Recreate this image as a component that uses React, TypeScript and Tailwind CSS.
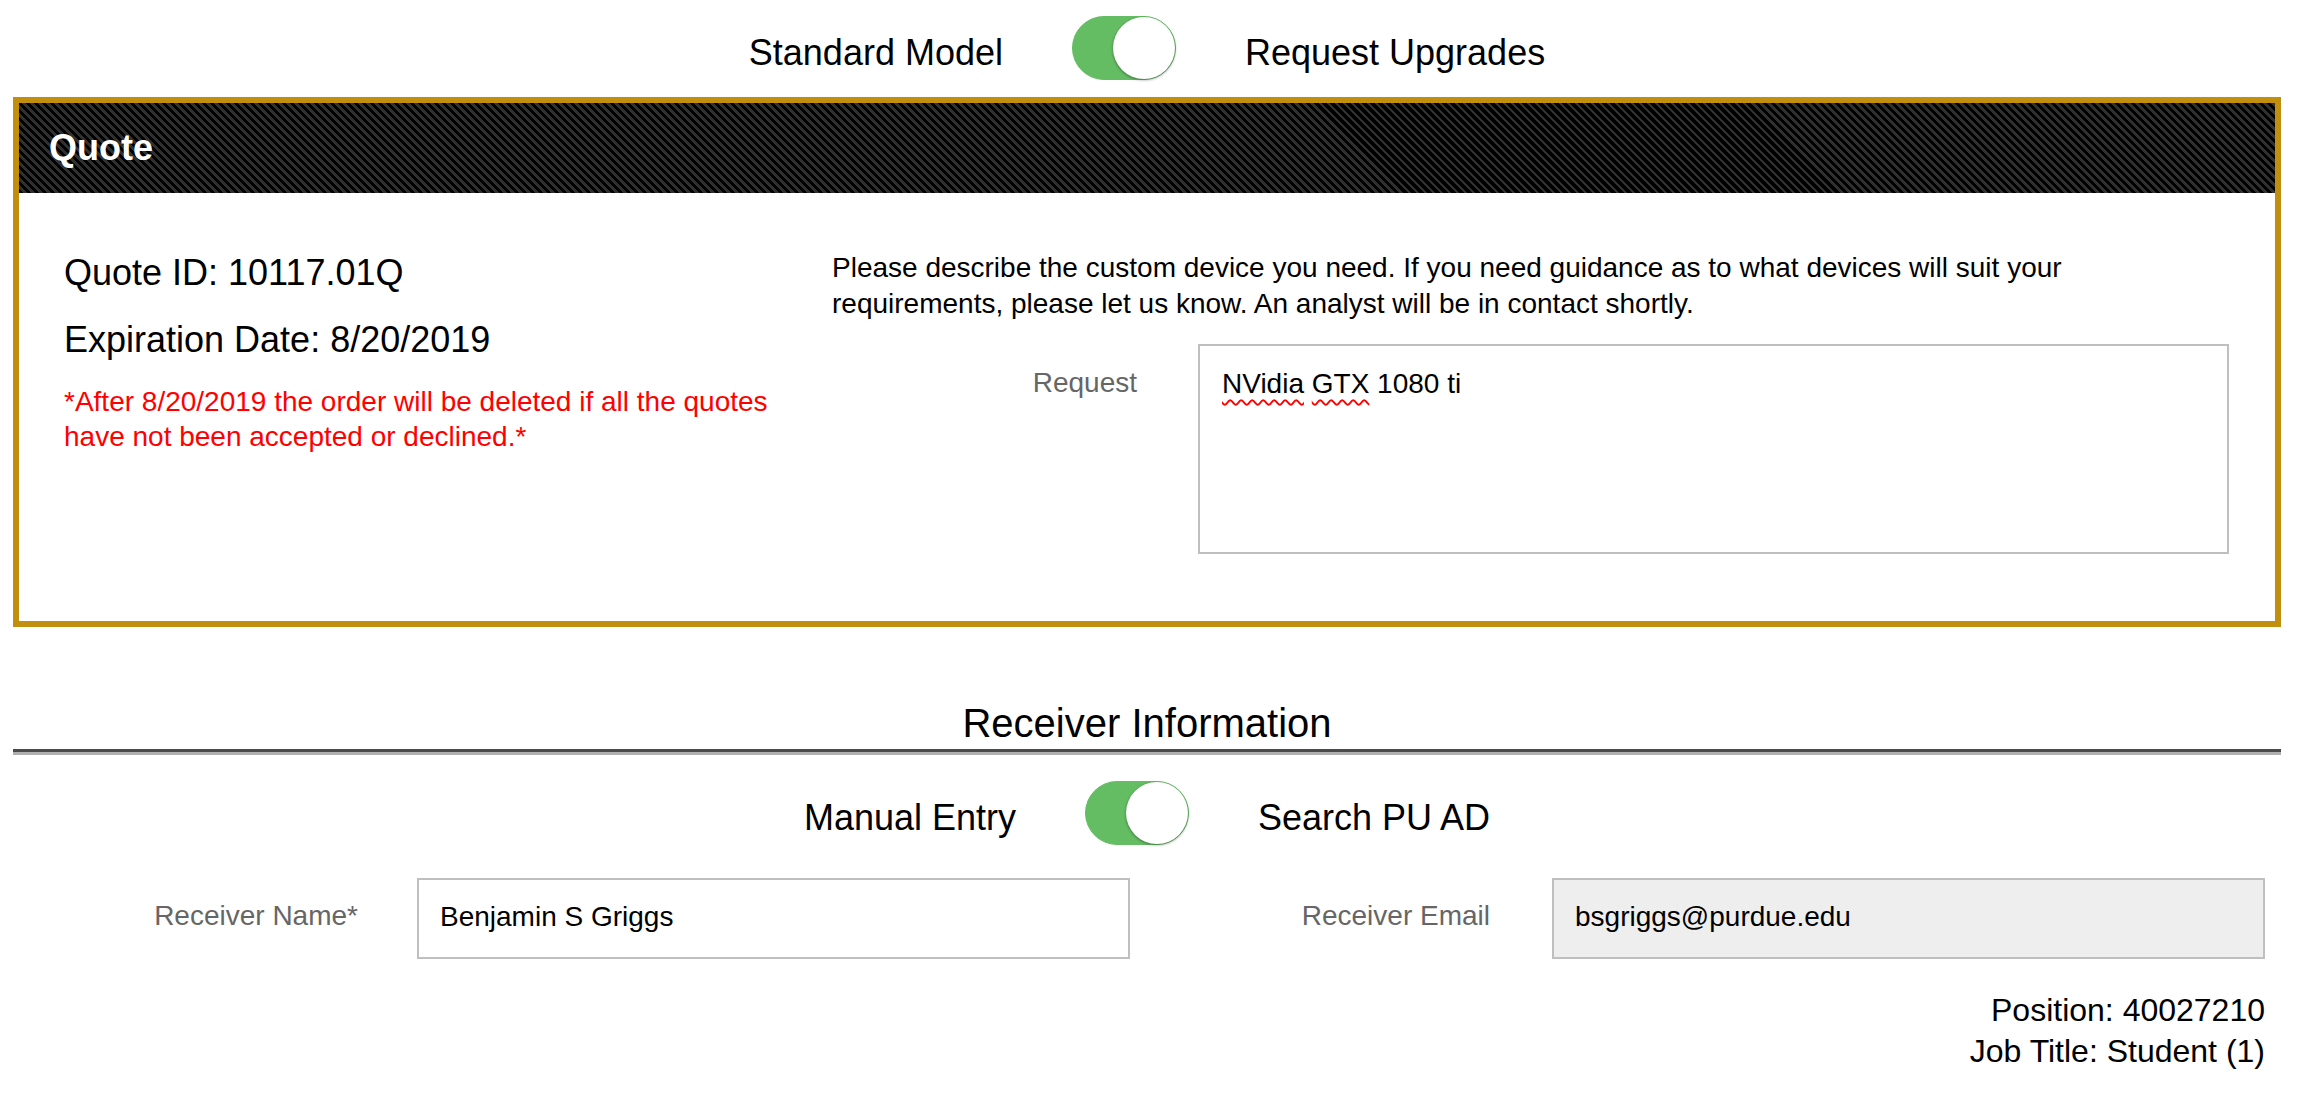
import React from "react";

function Switch() {
  return (
    <div className="flex h-[64px] w-[104px] shrink-0 items-center justify-end rounded-full border border-[#64bd63] bg-[#64bd63]">
      <div className="h-[62px] w-[62px] rounded-full bg-white shadow-[0_1px_3px_rgba(0,0,0,0.4)]" />
    </div>
  );
}

function ToggleRow({ left, right }: { left: string; right: string }) {
  return (
    <div className="flex items-start justify-center gap-[69px]">
      <span className="mt-[17px] text-[36px] leading-[40px] whitespace-nowrap">{left}</span>
      <Switch />
      <span className="mt-[17px] text-[36px] leading-[40px] whitespace-nowrap">{right}</span>
    </div>
  );
}

export default function App() {
  return (
    <div className="h-[1102px] w-[2304px] overflow-hidden bg-white text-black font-['Liberation_Sans',Arial,Helvetica,sans-serif]">
      <div className="ml-[13px] w-[2268px]">
        <div className="h-[97px] pt-[16px]">
          <ToggleRow left="Standard Model" right="Request Upgrades" />
        </div>

        {/* Quote panel */}
        <div className="h-[530px] border-[6px] border-[#c28e0e]">
          <div className="flex h-[90px] items-center pl-[30px] bg-[image:repeating-linear-gradient(45deg,#000000_0px,#000000_3px,#303030_3px,#303030_5.66px)]">
            <span className="text-[36px] font-bold leading-[40px] text-white">Quote</span>
          </div>
          <div className="flex pl-[45px] pr-[46px] pt-[57px]">
            <div className="w-[740px] shrink-0 pt-[3px]">
              <div className="text-[36px] leading-[40px]">Quote ID: 10117.01Q</div>
              <div className="mt-[27px] text-[36px] leading-[40px]">Expiration Date: 8/20/2019</div>
              <div className="mt-[24px] text-[28px] leading-[35px] text-[#ff0000]">
                *After 8/20/2019 the order will be deleted if all the quotes have not been accepted or declined.*
              </div>
            </div>
            <div className="ml-[28px] flex-1">
              <p className="text-[28px] leading-[36px]">
                Please describe the custom device you need. If you need guidance as to what devices will suit your
                requirements, please let us know. An analyst will be in contact shortly.
              </p>
              <div className="mt-[22px] flex gap-[61px]">
                <label className="w-[305px] shrink-0 pt-[21px] text-right text-[28px] leading-[35px] text-[#666666]">
                  Request
                </label>
                <div className="h-[210px] flex-1 border-2 border-[#bfbfbf] px-[22px] pt-[20px] text-[28px] leading-[35px]">
                  <span className="underline decoration-wavy decoration-[#ff0000] decoration-[1.5px] underline-offset-[6px]">NVidia</span>{" "}
                  <span className="underline decoration-wavy decoration-[#ff0000] decoration-[1.5px] underline-offset-[6px]">GTX</span> 1080 ti
                </div>
              </div>
            </div>
          </div>
        </div>

        {/* Receiver information */}
        <h2 className="mt-[73px] text-center text-[40px] leading-[46px]">Receiver Information</h2>
        <div className="mt-[3px] h-[3px] bg-[#4a4a4a]" />
        <div className="h-[3px] bg-[#b0b0b0]" />

        <div className="mt-[26px]">
          <ToggleRow left="Manual Entry" right="Search PU AD" />
        </div>

        <div className="mt-[33px] grid grid-cols-2">
          <div className="flex">
            <label className="w-[345px] shrink-0 pt-[20px] text-right text-[28px] leading-[35px] text-[#666666]">
              Receiver Name*
            </label>
            <div className="ml-[59px] h-[81px] w-[713px] border-2 border-[#bfbfbf] px-[21px] pt-[19px] text-[28px] leading-[35px]">
              Benjamin S Griggs
            </div>
          </div>
          <div className="flex">
            <label className="w-[343px] shrink-0 pt-[20px] text-right text-[28px] leading-[35px] text-[#666666]">
              Receiver Email
            </label>
            <div className="ml-[62px] h-[81px] w-[713px] border-2 border-[#bfbfbf] bg-[#eeeeee] px-[21px] pt-[19px] text-[28px] leading-[35px]">
              bsgriggs@purdue.edu
            </div>
          </div>
        </div>

        <div className="mt-[31px] pr-[16px] text-right text-[32px] leading-[41px]">
          <div>Position: 40027210</div>
          <div>Job Title: Student (1)</div>
        </div>
      </div>
    </div>
  );
}
